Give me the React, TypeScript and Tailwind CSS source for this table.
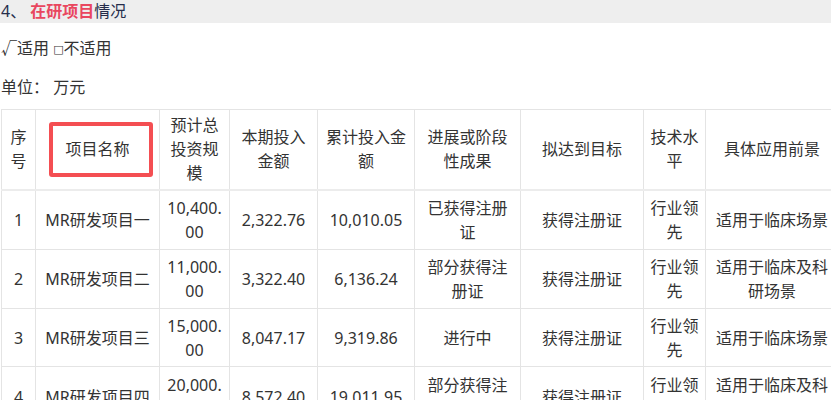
import React from 'react';

const cols = [34, 124, 70, 88, 97, 106, 123, 62, 133];

const headers = ['序号', '项目名称', '预计总投资规模', '本期投入金额', '累计投入金额', '进展或阶段性成果', '拟达到目标', '技术水平', '具体应用前景'];

const rows = [
  { h: 'h-[60px]', cells: ['1', 'MR研发项目一', '10,400.00', '2,322.76', '10,010.05', '已获得注册证', '获得注册证', '行业领先', '适用于临床场景'] },
  { h: 'h-[59px]', cells: ['2', 'MR研发项目二', '11,000.00', '3,322.40', '6,136.24', '部分获得注册证', '获得注册证', '行业领先', '适用于临床及科研场景'] },
  { h: 'h-[58px]', cells: ['3', 'MR研发项目三', '15,000.00', '8,047.17', '9,319.86', '进行中', '获得注册证', '行业领先', '适用于临床场景'] },
  { h: 'h-[60px]', cells: ['4', 'MR研发项目四', '20,000.00', '8,572.40', '19,011.95', '部分获得注册证', '获得注册证', '行业领先', '适用于临床及科研场景'] },
];

export default function App() {
  return (
    <div className="w-[831px] h-[400px] overflow-hidden bg-white text-[16px] text-[#333] font-['Noto_Sans','Noto_Sans_CJK_SC',sans-serif]">
      <div className="h-[23px] leading-[23px] bg-[#eeeeee] pl-[1px] text-[#262d4b]">
        4、 <span className="font-bold text-[#e9475f]">在研项目</span>情况
      </div>
      <p className="mt-[13px] h-[24px] leading-[24px] pl-[1px] overflow-visible">
        √适用{' '}
        <span className="text-[11px] leading-none font-['DejaVu_Sans',sans-serif] align-[1px]">□</span>不适用
      </p>
      <p className="mt-[15px] h-[24px] leading-[24px] pl-[1px]">单位： 万元</p>

      <table className="mt-[10px] ml-[1px] table-fixed border-collapse break-all w-[837px]">
        <colgroup>
          {cols.map((w, i) => (
            <col key={i} style={{ width: w }} />
          ))}
        </colgroup>
        <thead>
          <tr className="h-[80px]">
            {headers.map((t, i) => (
              <th
                key={i}
                className="relative border border-[#e4e4e4] border-b-2 border-b-[#ececec] px-[6px] font-normal leading-[24px] text-center align-middle"
              >
                {t}
                {i === 1 && (
                  <span className="absolute left-[13px] top-[12px] w-[104px] h-[55px] border-[4px] border-[#f44e52] rounded-[3px]" />
                )}
              </th>
            ))}
          </tr>
        </thead>
        <tbody>
          {rows.map((r, ri) => (
            <tr key={ri} className={r.h}>
              {r.cells.map((c, ci) => (
                <td key={ci} className="border border-[#e4e4e4] px-[6px] leading-[24px] text-center align-middle">
                  {c}
                </td>
              ))}
            </tr>
          ))}
        </tbody>
      </table>
    </div>
  );
}
